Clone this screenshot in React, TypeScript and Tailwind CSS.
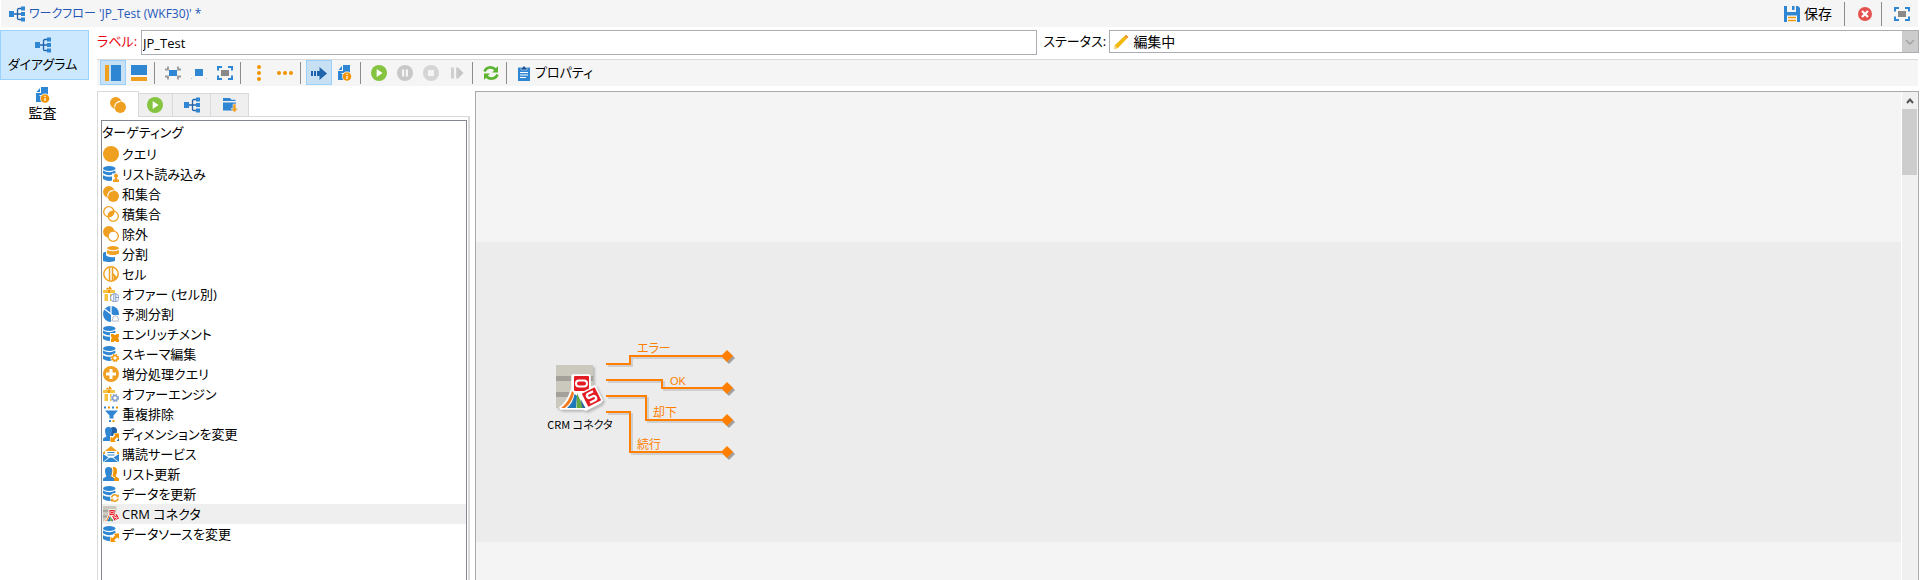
import type { ReactNode } from 'react';

const BLUE = '#2f86d2';
const NAVY = '#1f63ad';
const ORANGE = '#f0a020';
const DEEP = '#f29400';
const YELLOW = '#f8c440';
const GREEN = '#84c441';

function Icon({ children, className = 'h-4 w-4' }: { children: ReactNode; className?: string }) {
  return (
    <svg viewBox="0 0 16 16" className={`shrink-0 ${className}`} aria-hidden="true">
      {children}
    </svg>
  );
}

const Flow = () => (
  <Icon>
    <rect x="0" y="5" width="5" height="6" fill={BLUE} />
    <path d="M5 8h4M12 2.500H10Q8.500 2.500 8.500 4v8.500Q8.500 13.500 10 13.500h2M8.500 8H12" fill="none" stroke={NAVY} strokeWidth="1.300" />
    <path d="M12 0.500h4v4h-4zM12 6h4v4h-4zM12 11.500h4v4h-4z" fill={BLUE} />
  </Icon>
);

const Audit = () => (
  <Icon>
    <path d="M6 0h7v9H7v6H1V6h5z" fill={BLUE} />
    <path d="M1.500 5 5 1v4z" fill={BLUE} />
    <path d="M4.500 8.500h3v3" fill="none" stroke="#fff" strokeWidth="1" />
    <circle cx="10" cy="11.500" r="4.900" fill="#fff" />
    <circle cx="10" cy="11.500" r="4.300" fill={DEEP} />
    <path d="M10 11v3M10 8.800v1.200" stroke="#fff" strokeWidth="1.300" />
  </Icon>
);

const Play = () => (
  <Icon>
    <circle cx="8" cy="8" r="8" fill={GREEN} />
    <path d="M5.700 4v8L11.500 8z" fill="#fff" />
  </Icon>
);
const Pause = () => (
  <Icon>
    <circle cx="8" cy="8" r="8" fill="#c8c8c8" />
    <path d="M5 4.500h2.200v7H5zM8.800 4.500H11v7H8.800z" fill="#f5f5f5" />
  </Icon>
);
const Stop = () => (
  <Icon>
    <circle cx="8" cy="8" r="8" fill="#d5d5d5" />
    <rect x="5" y="5" width="6" height="6" fill="#f5f5f5" />
  </Icon>
);
const Step = () => (
  <Icon>
    <path d="M2 2.500h3v11H2zM7 2.500h2v11H7z" fill="#cfcfcf" />
    <path d="M9 2.500 14.500 8 9 13.500z" fill="#c6c6c6" />
  </Icon>
);
const Refresh = () => (
  <Icon>
    <path d="M1.500 6.500C3 2 9 1 12.500 4.500M14.500 9.500C13 14 7 15 3.500 11.500" fill="none" stroke="#5cb531" strokeWidth="2.600" />
    <path d="M15 1v6.500H9zM1 15V8.500h6z" fill="#5cb531" />
  </Icon>
);
const Clipboard = () => (
  <Icon>
    <path d="M2 2.500h12V16H2z" fill={BLUE} />
    <path d="M5 5V2.500h1.500a1.500 1.500 0 0 1 3 0H11V5z" fill="#1b5796" stroke="#fff" strokeWidth=".5" />
    <path d="M4 7.500h8M4 10h8M4 12.500h6" stroke="#fff" strokeWidth="1.100" />
  </Icon>
);
const ViewSide = () => (
  <Icon>
    <rect x="0" y="0" width="4" height="16" fill={ORANGE} />
    <rect x="6" y="0" width="10" height="16" fill={BLUE} />
  </Icon>
);
const ViewBottom = () => (
  <Icon>
    <rect x="0" y="0" width="16" height="10" fill={BLUE} />
    <rect x="0" y="12" width="16" height="4" fill={ORANGE} />
  </Icon>
);
const Shrink = () => (
  <Icon>
    <rect x="4" y="5" width="8" height="6" fill={BLUE} />
    <path d="M0 4.500h3V1.500M16 4.500h-3V1.500M0 11.500h3v3M16 11.500h-3v3" fill="none" stroke="#999" strokeWidth="1.800" />
  </Icon>
);
const Actual = () => (
  <Icon>
    <rect x="4" y="4" width="8" height="7" fill={BLUE} />
    <path d="M0 13.500h1M15 13.500h1" stroke="#bbb" />
  </Icon>
);
const Expand = () => (
  <Icon>
    <rect x="4" y="5" width="8" height="6" fill="#8a8a8a" />
    <path d="M1 5.500V2h4M11 2h4v3.500M15 10.500V14h-4M5 14H1v-3.500" fill="none" stroke={BLUE} strokeWidth="2" />
  </Icon>
);
const DotsV = () => (
  <Icon>
    <g fill={DEEP}><circle cx="8" cy="2" r="2" /><circle cx="8" cy="8" r="2" /><circle cx="8" cy="14" r="2" /></g>
  </Icon>
);
const DotsH = () => (
  <Icon>
    <g fill={DEEP}><circle cx="2" cy="8" r="2" /><circle cx="8" cy="8" r="2" /><circle cx="14" cy="8" r="2" /></g>
  </Icon>
);
const Arrow = () => (
  <Icon>
    <path d="M0 6h2v5H0zM3 6h2v5H3zM6 6h2.500V2L16 8.500 8.500 15v-4H6z" fill={NAVY} />
  </Icon>
);
const Save = () => (
  <Icon>
    <path d="M0 0h3v6h9V0h2l2 2v14H0z" fill={BLUE} />
    <path d="M8 0h2.500v4H8z" fill={BLUE} />
    <path d="M3 9.500h10V16H3z" fill="#fff" />
    <path d="M4 11.500h8M4 14.500h8" stroke={DEEP} strokeWidth="1.600" />
  </Icon>
);
const Close = () => (
  <Icon>
    <circle cx="8" cy="8" r="7" fill="#e4524f" />
    <path d="m5 5 6 6m0-6-6 6" stroke="#fff" strokeWidth="2.200" />
  </Icon>
);
const FolderDown = () => (
  <Icon>
    <path d="M1 1h7l1.500 1.800H13.500V4H1zM1 5.500h13v8H1z" fill={BLUE} />
    <path d="M11 7h3v4.500h2L12.500 15.500 9 11.500h2z" fill={ORANGE} stroke="#eee" strokeWidth=".6" />
  </Icon>
);
const Pencil = () => (
  <Icon>
    <path d="m1 15 1-4L11.500 2 14 4.500 5 14z" fill="#f2b90c" />
    <path d="m11.500 2 1.500-1.200L15.500 3 14 4.500z" fill="#f28c1e" />
    <path d="m1 15 1-3.500L4.500 14z" fill="#f7d98a" />
  </Icon>
);

const Disc = () => <Icon><circle cx="8" cy="8" r="8" fill={ORANGE} /></Icon>;
const Union = () => (
  <Icon>
    <circle cx="5.800" cy="5.800" r="5.800" fill={ORANGE} />
    <circle cx="10.200" cy="10.200" r="5.800" fill={ORANGE} />
    <path d="M4.700 10.500A5.700 5.700 0 0 1 10.500 4.400" fill="none" stroke="#fff" strokeWidth="1.100" />
  </Icon>
);
const Intersect = () => (
  <Icon>
    <path d="M4.800 10.800A5.200 5.200 0 0 1 11 4.800 5.200 5.200 0 0 1 4.800 10.800" fill={ORANGE} />
    <g fill="none" stroke={ORANGE} strokeWidth="1.300"><circle cx="5.800" cy="5.800" r="5.100" /><circle cx="10.200" cy="10.200" r="5.100" /></g>
  </Icon>
);
const Exclude = () => (
  <Icon>
    <circle cx="5.800" cy="5.800" r="5.800" fill={ORANGE} />
    <circle cx="10.200" cy="10.200" r="5.100" fill="#fff" stroke={ORANGE} strokeWidth="1.300" />
  </Icon>
);
const Database = () => (
  <>
    <ellipse cx="6.200" cy="2.500" rx="6.200" ry="2.500" fill={BLUE} />
    <path d="M0 4.500Q6.200 8 12.400 4.500v2.800Q6.200 11 0 7.300zM0 9.200Q6.200 12.500 12.400 9.200v3.800Q6.200 17 0 13z" fill={BLUE} />
  </>
);
const ListRead = () => (
  <Icon>
    <Database />
    <path d="M9 7.500h7V16H9z" fill="#fff" />
    <path d="M10 16v-2.500h1.700L12 11.500a2 2 0 1 1 2 0l.3 2H16V16z" fill={ORANGE} />
  </Icon>
);
const Split = () => (
  <Icon>
    <path d="M0 7.500Q0 6 3 5.800V9.500Q6 12 12 11V15q-6 2-12 0z" fill={BLUE} />
    <ellipse cx="10" cy="2.200" rx="6" ry="2.200" fill={ORANGE} />
    <path d="M4 4q6 2.500 12 0v3.500q-6 3-12 0z" fill={ORANGE} />
    <path d="M4 3.500q6 2.500 12 0" fill="none" stroke="#fff" strokeWidth=".7" />
  </Icon>
);
const Cell = () => (
  <Icon>
    <circle cx="8" cy="8" r="7.200" fill="#fff" stroke={ORANGE} strokeWidth="1.500" />
    <path d="M6.500 1v14M9.500 1v14M9.500 7.500 14 12" stroke={ORANGE} strokeWidth="1.500" />
    <path d="m10.500 9 3.500 3.500q-1.500 1.800-3.500 2.200z" fill={ORANGE} />
  </Icon>
);
const Gift = () => (
  <>
    <path d="M0 4h12v3H0zM1.500 8H5v7H1.500zM7 8h3v7H7z" fill={YELLOW} />
    <path d="m3 3.500 1-2 2 1L6 0l2 1.500L9 3.500zM5 4h2v3H5z" fill={DEEP} />
  </>
);
const Gear = ({ color }: { color: string }) => (
  <>
    <circle cx="12" cy="12" r="4.500" fill="#fff" />
    <circle cx="12" cy="12" r="3.300" fill="none" stroke={color} strokeWidth="1.500" strokeDasharray="1.600 1" />
    <circle cx="12" cy="12" r="2.300" fill="none" stroke={color} strokeWidth="1.200" />
  </>
);
const OfferCell = () => (
  <Icon>
    <Gift />
    <circle cx="11.800" cy="11.800" r="4.200" fill="#fff" stroke="#7c9cc8" />
    <path d="M10.800 8v8M12.800 8v8M12.800 11.500h3" stroke="#7c9cc8" />
  </Icon>
);
const Predict = () => (
  <Icon>
    <circle cx="8" cy="8" r="8" fill={BLUE} />
    <path d="M8 0v8L1.500 3M8 8l5.500 6" fill="none" stroke="#fff" strokeWidth="1.300" />
    <path d="M8 16V9h8v7z" fill="#fff" />
    <path d="M9 15v-1l1-1v-2q2.500-2.500 5 0v2l1 1v1z" fill="#fff" stroke="#a9b4c6" strokeWidth=".9" />
  </Icon>
);
const Enrich = () => (
  <Icon>
    <Database />
    <path d="M7 7h9v9H7z" fill="#fff" />
    <path d="M8 8h2.500q1.500 1.800 3 0H16v2.500q-1.800 1.500 0 3V16h-2.500q-1.500-1.800-3 0H8v-2.500q1.800-1.500 0-3z" fill={DEEP} />
  </Icon>
);
const Schema = () => <Icon><Database /><Gear color={DEEP} /></Icon>;
const Plus = () => (
  <Icon>
    <circle cx="8" cy="8" r="8" fill={ORANGE} />
    <path d="M8 3v10M3 8h10" stroke="#fff" strokeWidth="3" />
  </Icon>
);
const OfferEngine = () => <Icon><Gift /><Gear color="#7c9cc8" /></Icon>;
const Funnel = () => (
  <Icon>
    <path d="M2 4.500h13L10.500 9.500v3h-4v-3z" fill={BLUE} />
    <path d="M1 .5h2v2H1zM9 .5h2v2H9zM6 14h2v2H6z" fill={BLUE} />
    <path d="M5 .5h2v2H5zM13 .5h2v2h-2zM9.500 14h2v2h-2z" fill={DEEP} />
  </Icon>
);
const Person = ({ color }: { color: string }) => (
  <path d="M0 15v-2.500l3.500-2.200Q2 8 2 4.500 2 1 5.500 1T9 4.500Q9 8 7.500 10.300L11 12.500V15z" fill={color} />
);
const SwapArrow = () => (
  <>
    <path d="M7 16V10l3 0 1-3h5v5l-3 4z" fill="#fff" />
    <path d="M10.500 7.500H16V13l-1.800-1.800-3 3L13 16H7.500v-5.500L9.300 12.200l3-3z" fill={DEEP} />
  </>
);
const Dimension = () => (
  <Icon>
    <g transform="translate(5 0)"><Person color="#1f5fa5" /></g>
    <Person color={BLUE} />
    <SwapArrow />
  </Icon>
);
const Mail = () => (
  <Icon>
    <path d="M0 6.500 8 0l8 6.500v1.500H0z" fill={ORANGE} />
    <path d="M2 5h12v7H2z" fill="#fff" />
    <path d="M4.500 6.500h7M4.500 9h7" stroke={BLUE} strokeWidth="1.200" />
    <path d="M0 8l5.500 3.500L0 16zM16 8l-5.500 3.500L16 16zM1 16l5.500-4.200h3L15 16z" fill={BLUE} />
  </Icon>
);
const ListUpdate = () => (
  <Icon>
    <g transform="translate(5 0)"><Person color={DEEP} /></g>
    <path d="M9 0q2 5 0 10l3 2" fill="none" stroke="#fff" />
    <Person color={BLUE} />
  </Icon>
);
const DataUpdate = () => (
  <Icon>
    <Database />
    <circle cx="11.800" cy="11.800" r="4.800" fill="#fff" />
    <path d="M8.500 11.500q1-3 4-2.800 1.500.3 2.300 1.500M15.200 12.500q-1 3-4 2.800-1.500-.3-2.300-1.500" fill="none" stroke={ORANGE} strokeWidth="1.500" />
    <path d="M15.800 8v3.200h-3zM8 16v-3.200h3z" fill={ORANGE} />
  </Icon>
);
const SourceChange = () => <Icon><Database /><SwapArrow /></Icon>;

function CrmArt() {
  return (
    <>
      <rect x="0" y="0" width="37" height="43" rx="1.500" fill="#a3a199" />
      <path d="M0 1.500Q0 0 1.500 0h34Q37 0 37 1.500V11H0zM0 16h37v11H0zM0 32h37v11H1.500Q0 43 0 41.500z" fill="#cbc9bd" />
      <path d="M5 43Q12 38 16 26l1-2V11h16v13l5-2 6 15-14 7-3-1z" fill="#fff" stroke="#fff" strokeWidth="3.500" strokeLinejoin="round" />
      <path d="M5 43Q13 37 16 26l2 2Q16 38 9 43z" fill="#f47b20" />
      <path d="M11 43Q17 38 18.500 29L21 31l-1 12z" fill="#1f78b8" />
      <path d="M20.500 43 21 28l7 15z" fill="#64a844" />
      <path d="m24.500 34 5 9h-3z" fill="#2b5fa8" />
      <rect x="18" y="11" width="15" height="15" rx="1" fill="#e31b23" />
      <rect x="20" y="15.500" width="11" height="6" rx="3" fill="none" stroke="#fff" strokeWidth="2" />
      <g transform="translate(35.500 32) rotate(-27)">
        <rect x="-8.700" y="-8.700" width="17.400" height="17.400" fill="#fff" />
        <rect x="-7.200" y="-7.200" width="14.400" height="14.400" fill="#e31b23" />
        <path d="M4-4.500H-1.500a2.200 2.200 0 0 0 0 4.400H1.500a2.200 2.200 0 0 1 0 4.600H-4" fill="none" stroke="#fff" strokeWidth="2.300" />
      </g>
    </>
  );
}
const CrmSmall = () => (
  <svg viewBox="0 0 45 45" className="h-4 w-4 shrink-0" aria-hidden="true"><CrmArt /></svg>
);

const activities: [string, () => ReactNode][] = [
  ['クエリ', Disc],
  ['リスト読み込み', ListRead],
  ['和集合', Union],
  ['積集合', Intersect],
  ['除外', Exclude],
  ['分割', Split],
  ['セル', Cell],
  ['オファー (セル別)', OfferCell],
  ['予測分割', Predict],
  ['エンリッチメント', Enrich],
  ['スキーマ編集', Schema],
  ['増分処理クエリ', Plus],
  ['オファーエンジン', OfferEngine],
  ['重複排除', Funnel],
  ['ディメンションを変更', Dimension],
  ['購読サービス', Mail],
  ['リスト更新', ListUpdate],
  ['データを更新', DataUpdate],
  ['CRM コネクタ', CrmSmall],
  ['データソースを変更', SourceChange],
];

type Tool = { label: string; icon: () => ReactNode; on?: boolean; off?: boolean };
const toolGroups: Tool[][] = [
  [{ label: '左パネル', icon: ViewSide, on: true }, { label: '下パネル', icon: ViewBottom }],
  [{ label: '縮小', icon: Shrink }, { label: '実サイズ', icon: Actual }, { label: '全体表示', icon: Expand }],
  [{ label: '縦に整列', icon: DotsV }, { label: '横に整列', icon: DotsH }],
  [{ label: '進行状況', icon: Arrow, on: true }, { label: 'ログ', icon: Audit }],
  [
    { label: '開始', icon: Play },
    { label: '一時停止', icon: Pause, off: true },
    { label: '停止', icon: Stop, off: true },
    { label: 'ステップ', icon: Step, off: true },
  ],
  [{ label: '更新', icon: Refresh }],
];

const paletteTabs = [
  { label: 'ターゲティング', icon: Union, style: 'h-[26px] w-[42px] border-r bg-white' },
  { label: 'フロー制御', icon: Play, style: 'h-6 w-[34px] border-r border-b bg-[#efefef] pr-0.5' },
  { label: 'アクション', icon: Flow, style: 'h-6 w-[38px] border-r border-b bg-[#efefef]' },
  { label: 'イベント', icon: FolderDown, style: 'h-6 w-[38px] border-r border-b bg-[#efefef]' },
];

const wires = [
  'M0 15h24V7h95',
  'M0 31h56v8h63',
  'M0 47h40v24h79',
  'M0 63h24v40h95',
];
const ends = [7, 39, 71, 103];

function Header() {
  return (
    <header className="ml-px mr-0.5 flex h-[27px] items-center bg-[#f5f5f5] px-2">
      <Flow />
      <h1 className="ml-1 text-xs text-[#2457b8]">ワークフロー 'JP_Test (WKF30)' *</h1>
      <div className="ml-auto flex h-full items-center">
        <button type="button" className="flex items-center gap-1 text-sm"><Save />保存</button>
        <span className="ml-3 h-6 w-px bg-[#8c8c8c]" />
        <button type="button" aria-label="閉じる" className="ml-3 mr-2"><Close /></button>
        <span className="mr-3 h-6 w-px bg-[#8c8c8c]" />
        <button type="button" aria-label="最大化"><Expand /></button>
      </div>
    </header>
  );
}

function Sidebar() {
  return (
    <nav className="flex w-[89px] shrink-0 flex-col text-sm">
      <button type="button" className="flex h-[50px] flex-col items-center border border-[#99d1ff] bg-[#cce8ff] pr-1 pt-1.5 text-[13px] leading-[22px]">
        <Flow />
        ダイアグラム
      </button>
      <button type="button" className="flex h-[50px] flex-col items-center pr-1 pt-[7px] leading-5">
        <Audit />
        監査
      </button>
    </nav>
  );
}

function Fields() {
  return (
    <div className="flex h-7 shrink-0 items-start">
      <label htmlFor="label" className="w-11 shrink-0 whitespace-nowrap leading-[22px] text-red-600">ラベル:</label>
      <input id="label" defaultValue="JP_Test" className="h-[25px] min-w-0 flex-[895] border border-[#abadb3] bg-white px-px outline-none" />
      <label htmlFor="status" className="ml-1.5 w-[66px] shrink-0 whitespace-nowrap leading-[22px]">ステータス:</label>
      <div className="flex h-[23px] min-w-0 flex-[810] items-stretch border border-[#abadb3] bg-white">
        <span className="flex items-center pl-[3px]"><Pencil /></span>
        <select id="status" defaultValue="edit" className="min-w-0 flex-1 appearance-none bg-transparent pl-1 text-sm leading-5 outline-none">
          <option value="edit">編集中</option>
        </select>
        <span className="flex w-4 items-center justify-center bg-[#cccccc]">
          <svg viewBox="0 0 10 6" className="h-1.5 w-2.5" aria-hidden="true"><path d="m1 1 4 4 4-4" fill="none" stroke="#a0a0a0" strokeWidth="1.300" /></svg>
        </span>
      </div>
    </div>
  );
}

function Toolbar() {
  return (
    <div role="toolbar" className="mr-px mt-px flex h-[27px] shrink-0 items-start border-t border-[#d9d9d9] bg-[#f5f5f5] pl-[3px]">
      {toolGroups.map((group, i) => (
        <div key={i} className="flex">
          {group.map(({ label, icon: Glyph, on, off }) => (
            <button
              key={label}
              type="button"
              aria-label={label}
              aria-pressed={on}
              disabled={off}
              className={`flex h-[25px] w-[26px] items-center justify-center border ${on ? 'border-[#99d1ff] bg-[#c8e0f4]' : 'border-transparent'}`}
            >
              <Glyph />
            </button>
          ))}
          <span className="ml-0.5 mr-[5px] mt-0.5 h-[22px] w-px bg-[#8c8c8c]" />
        </div>
      ))}
      <button type="button" className="flex h-[25px] items-center gap-[3px] pl-1"><Clipboard />プロパティ</button>
    </div>
  );
}

function Palette() {
  return (
    <aside className="flex w-[373px] shrink-0 flex-col">
      <div role="tablist" className="flex h-[26px] items-end">
        {paletteTabs.map(({ label, icon: Glyph, style }, i) => (
          <button
            key={label}
            type="button"
            role="tab"
            aria-label={label}
            aria-selected={i === 0}
            className={`flex items-center justify-center border-t border-[#d9d9d9] ${i === 0 ? 'border-l' : ''} ${style}`}
          >
            <Glyph />
          </button>
        ))}
        <span className="flex-1 border-b border-[#d9d9d9]" />
      </div>
      <div className="flex flex-1 flex-col border-l border-r-2 border-[#d9d9d9] pl-[3px] pr-px pt-[3px]">
        <div className="flex-1 border border-b-0 border-[#828790] bg-white">
          <h2 className="h-[23px] leading-[23px]">ターゲティング</h2>
          <ul>
            {activities.map(([name, Glyph]) => (
              <li key={name} className={`flex h-5 items-center gap-[3px] pl-px leading-5 ${name.startsWith('CRM') ? 'bg-[#efefef]' : ''}`}>
                <Glyph />
                {name}
              </li>
            ))}
          </ul>
        </div>
      </div>
    </aside>
  );
}

function Diagram() {
  return (
    <section className="ml-[5px] flex min-w-0 flex-1 border border-b-0 border-[#a8a8ad] bg-[#f4f4f4]">
      <div className="min-w-0 flex-1 pt-[150px]">
        <div className="relative h-[300px] bg-[#ececec]">
          <figure className="absolute left-[66px] top-[123px] flex w-[76px] flex-col items-center">
            <svg viewBox="0 0 48 48" className="h-12 w-12 drop-shadow-[2px_2px_1px_#b8b8b8]" aria-hidden="true"><CrmArt /></svg>
            <figcaption className="mt-px whitespace-nowrap font-['Noto_Sans_CJK_JP',sans-serif] text-[11px] leading-5">CRM コネクタ</figcaption>
          </figure>
          <svg viewBox="0 0 130 114" className="absolute left-[130px] top-[107px] h-[114px] w-[130px]" aria-hidden="true">
            <g fill="none" stroke="#cfcfcf" strokeWidth="2" transform="translate(2 2)">
              {wires.map((d) => <path key={d} d={d} />)}
            </g>
            {ends.map((y) => <path key={y} d={`M123 ${y - 4}l6 6-6 6-6-6z`} fill="#a0a0a0" />)}
            <g fill="none" stroke="#ff8000" strokeWidth="2">
              {wires.map((d) => <path key={d} d={d} />)}
            </g>
            {ends.map((y) => <path key={y} d={`M121 ${y - 6}l6 6-6 6-6-6z`} fill="#ff8000" />)}
          </svg>
          <div className="text-xs leading-4 text-[#ff8000]">
            <span className="absolute left-[161px] top-[99px]">エラー</span>
            <span className="absolute left-[194px] top-[131px] font-['Liberation_Sans'] text-[11px]">OK</span>
            <span className="absolute left-[177px] top-[163px]">却下</span>
            <span className="absolute left-[161px] top-[195px]">続行</span>
          </div>
        </div>
      </div>
      <div className="flex w-[17px] shrink-0 flex-col border-x border-l-white border-r-[#f4f4f4] bg-[#f0f0f0]">
        <button type="button" aria-label="上へスクロール" className="flex h-[17px] items-center justify-center">
          <svg viewBox="0 0 8 6" className="h-1.5 w-2" aria-hidden="true"><path d="m1 5 3-3.500L7 5" fill="none" stroke="#555" strokeWidth="2" /></svg>
        </button>
        <div className="h-[66px] bg-[#cdcdcd]" />
      </div>
    </section>
  );
}

export default function App() {
  return (
    <div className="flex min-h-screen flex-col bg-white font-['Open_Sans','Noto_Sans_CJK_JP',sans-serif] text-[13px] text-black [font-feature-settings:'palt']">
      <Header />
      <div className="flex flex-1 pr-px pt-[3px]">
        <Sidebar />
        <main className="ml-2 flex min-w-0 flex-1 flex-col">
          <Fields />
          <Toolbar />
          <div className="mt-[5px] flex flex-1">
            <Palette />
            <Diagram />
          </div>
        </main>
      </div>
    </div>
  );
}
